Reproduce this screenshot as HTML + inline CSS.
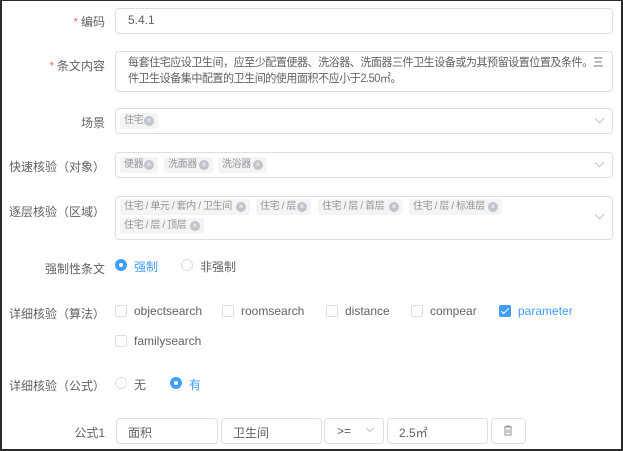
<!DOCTYPE html>
<html><head><meta charset="utf-8"><style>
*{box-sizing:border-box;margin:0;padding:0}
body{width:623px;height:451px;overflow:hidden;background:#fff;font-family:"Liberation Sans","Noto Sans CJK SC",sans-serif;font-size:12px;color:#606266;position:relative}
.frame{position:absolute;left:0;top:0;width:623px;height:451px;border:2px solid #2b2b2b;border-top-width:1px}
.a{position:absolute}
.lbl{position:absolute;right:518px;text-align:right;white-space:nowrap;color:#606266}
.lbl i{color:#f56c6c;font-style:normal;margin-right:3px}
.box{position:absolute;border:1px solid #dcdfe6;border-radius:4px;background:#fff}
.tag{position:absolute;height:16px;line-height:16px;background:#f4f4f5;border-radius:3px;color:#909399;font-size:10px;padding:0 0 0 4px;white-space:nowrap;overflow:hidden;letter-spacing:-0.4px}
.tag b{position:absolute;right:4px;top:3px;width:10px;height:10px;border-radius:50%;background:#c0c4cc;color:#fff;font-size:8px;line-height:10px;text-align:center;font-weight:normal;letter-spacing:0}
.arr{position:absolute;width:7px;height:7px;border-right:1px solid #c0c4cc;border-bottom:1px solid #c0c4cc;transform:rotate(45deg)}
.rad{position:absolute;width:12px;height:12px;border:1px solid #dcdfe6;border-radius:50%}
.rad.on{background:#409eff;border-color:#409eff}
.rad.on:after{content:"";position:absolute;left:3px;top:3px;width:4px;height:4px;background:#fff;border-radius:50%}
.cb{position:absolute;width:12px;height:12px;border:1px solid #dcdfe6;border-radius:2px}
.cb.on{background:#409eff;border-color:#409eff}
.cb.on:after{content:"";position:absolute;left:3px;top:0px;width:3px;height:7px;border-right:1.5px solid #fff;border-bottom:1.5px solid #fff;transform:rotate(45deg)}
.t{position:absolute;white-space:nowrap}
</style></head><body>
<div class="lbl" style="top:13px"><i>*</i>编码</div>
<div class="box" style="left:115px;top:8px;width:498px;height:26px"></div>
<div class="t" style="left:128px;top:13px">5.4.1</div>

<div class="lbl" style="top:57px"><i>*</i>条文内容</div>
<div class="box" style="left:115px;top:51px;width:498px;height:41px"></div>
<div class="t" style="left:128px;top:55px;line-height:16px;font-size:11.5px;letter-spacing:-0.5px;transform:scaleX(0.96);transform-origin:0 0">每套住宅应设卫生间，应至少配置便器、洗浴器、洗面器三件卫生设备或为其预留设置位置及条件。三<br>件卫生设备集中配置的卫生间的使用面积不应小于2.50㎡。</div>

<div class="lbl" style="top:114px">场景</div>
<div class="box" style="left:115px;top:108px;width:498px;height:26px"></div>
<div class="tag" style="left:120px;top:113px;width:38px">住宅<b>×</b></div>
<div class="arr" style="left:596px;top:115px"></div>

<div class="lbl" style="top:158px">快速核验（对象）</div>
<div class="box" style="left:115px;top:152px;width:498px;height:26px"></div>
<div class="tag" style="left:120px;top:157px;width:38px">便器<b>×</b></div>
<div class="tag" style="left:164px;top:157px;width:49px">洗面器<b>×</b></div>
<div class="tag" style="left:218px;top:157px;width:49px">洗浴器<b>×</b></div>
<div class="arr" style="left:596px;top:159px"></div>

<div class="lbl" style="top:203px">逐层核验（区域）</div>
<div class="box" style="left:115px;top:196px;width:498px;height:44px"></div>
<div class="tag" style="left:120px;top:199px;width:130px">住宅 / 单元 / 套内 / 卫生间<b>×</b></div>
<div class="tag" style="left:256px;top:199px;width:55px">住宅 / 层<b>×</b></div>
<div class="tag" style="left:318px;top:199px;width:85px">住宅 / 层 / 首层<b>×</b></div>
<div class="tag" style="left:409px;top:199px;width:93px">住宅 / 层 / 标准层<b>×</b></div>
<div class="tag" style="left:120px;top:218px;width:84px">住宅 / 层 / 顶层<b>×</b></div>
<div class="arr" style="left:596px;top:211px"></div>

<div class="lbl" style="top:260px">强制性条文</div>
<div class="rad on" style="left:115px;top:259px"></div>
<div class="t" style="left:134px;top:258px;color:#409eff">强制</div>
<div class="rad" style="left:181px;top:259px"></div>
<div class="t" style="left:200px;top:258px">非强制</div>

<div class="lbl" style="top:305px">详细核验（算法）</div>
<div class="cb" style="left:115px;top:305px"></div><div class="t" style="left:134px;top:304px">objectsearch</div>
<div class="cb" style="left:222px;top:305px"></div><div class="t" style="left:241px;top:304px">roomsearch</div>
<div class="cb" style="left:326px;top:305px"></div><div class="t" style="left:345px;top:304px">distance</div>
<div class="cb" style="left:411px;top:305px"></div><div class="t" style="left:430px;top:304px">compear</div>
<div class="cb on" style="left:499px;top:305px"></div><div class="t" style="left:518px;top:304px;color:#409eff">parameter</div>
<div class="cb" style="left:115px;top:335px"></div><div class="t" style="left:134px;top:334px">familysearch</div>

<div class="lbl" style="top:377px">详细核验（公式）</div>
<div class="rad" style="left:115px;top:377px"></div>
<div class="t" style="left:134px;top:376px">无</div>
<div class="rad on" style="left:170px;top:377px"></div>
<div class="t" style="left:189px;top:376px;color:#409eff">有</div>

<div class="lbl" style="top:424px">公式1</div>
<div class="box" style="left:116px;top:418px;width:102px;height:26px"></div><div class="t" style="left:128px;top:424px">面积</div>
<div class="box" style="left:221px;top:418px;width:101px;height:26px"></div><div class="t" style="left:233px;top:424px">卫生间</div>
<div class="box" style="left:324px;top:418px;width:60px;height:26px"></div><div class="t" style="left:337px;top:424px">&gt;=</div>
<div class="arr" style="left:367px;top:425px;width:6px;height:6px"></div>
<div class="box" style="left:387px;top:418px;width:101px;height:26px"></div><div class="t" style="left:399px;top:424px">2.5㎡</div>
<div class="box" style="left:491px;top:418px;width:35px;height:26px"></div>
<svg class="a" style="left:503px;top:425px" width="10" height="11" viewBox="0 0 10 11"><path d="M1 2h8M3.5 2V1h3v1M2 2v8h6V2M4 4.5v3.5M6 4.5v3.5" stroke="#909399" fill="none" stroke-width="1"/></svg>
<div class="frame"></div>
</body></html>
